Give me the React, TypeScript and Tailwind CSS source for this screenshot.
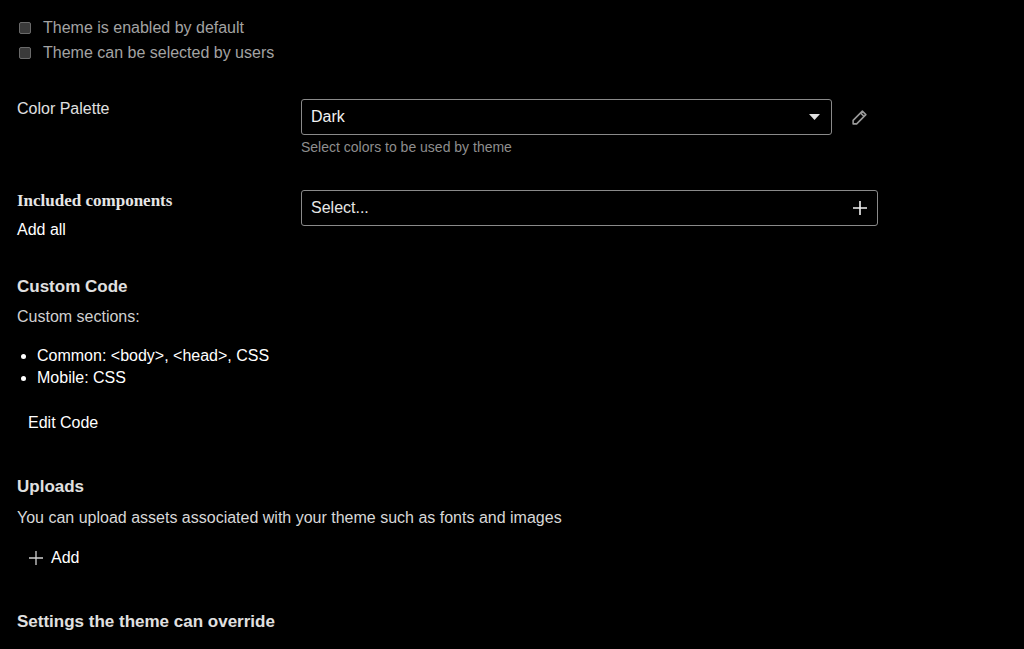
import React from "react";

export default function App() {
  return (
    <div className="min-h-[649px] w-[1024px] bg-black text-[#e6e6e6] overflow-hidden leading-[20px]" style={{ fontFamily: '"Liberation Sans", Arial, sans-serif' }}>
      <div className="pl-[17px] pt-[18px]">
        <div className="flex flex-col gap-[5px] text-[16px] text-[#a3a3a3]">
          {["Theme is enabled by default", "Theme can be selected by users"].map((t) => (
            <label key={t} className="flex items-center h-[20px]">
              <span className="ml-[2px] w-[12px] h-[12px] rounded-[2px] bg-[#3a3a3a] border border-[#6a6a6a]" />
              <span className="ml-[12px]">{t}</span>
            </label>
          ))}
        </div>

        <div className="flex mt-[36px]">
          <div className="w-[284px] text-[16px] pt-[0px] text-[#e0e0e0]">Color Palette</div>
          <div>
            <div className="flex items-center">
              <div className="w-[531px] h-[36px] border border-[#8a8a8a] rounded-[3px] flex items-center justify-between pl-[9px] pr-[11px] text-[16px] text-[#f2f2f2]">
                <span>Dark</span>
                <svg width="11" height="6" viewBox="0 0 11 6"><path d="M0 0h11L5.5 6z" fill="#e0e0e0" /></svg>
              </div>
              <svg className="ml-[19px]" width="17" height="17" viewBox="0 0 24 24" fill="none" stroke="#9a9a9a" strokeWidth="2.2" strokeLinejoin="round">
                <path d="M16 3l5 5L8 21H3v-5z" />
                <path d="M13.5 5.5l5 5" />
              </svg>
            </div>
            <div className="text-[14px] leading-[16px] text-[#8e8e8e] mt-[4px]">Select colors to be used by theme</div>
          </div>
        </div>

        <div className="flex mt-[35px]">
          <div className="w-[284px]">
            <div className="text-[17px] font-semibold text-[#e6e6e6] mt-[1px]" style={{ fontFamily: '"Liberation Serif", serif' }}>Included components</div>
            <div className="text-[16px] text-white mt-[9px]">Add all</div>
          </div>
          <div className="w-[577px] h-[36px] border border-[#8a8a8a] rounded-[3px] flex items-center justify-between pl-[9px] pr-[10px] text-[16px] text-[#e6e6e6]">
            <span>Select...</span>
            <svg width="14" height="14" viewBox="0 0 14 14" stroke="#f0f0f0" strokeWidth="1.6"><path d="M7 0v14M0 7h14" /></svg>
          </div>
        </div>

        <div className="text-[17px] font-bold text-[#e0e0e0] mt-[37px]">Custom Code</div>
        <div className="text-[16px] text-[#d0d0d0] mt-[10px]">Custom sections:</div>
        <ul className="list-disc pl-[20px] mt-[18px] text-[16px] text-white leading-[22px]">
          <li>Common: &lt;body&gt;, &lt;head&gt;, CSS</li>
          <li>Mobile: CSS</li>
        </ul>
        <div className="text-[16px] text-white ml-[11px] mt-[24px]">Edit Code</div>

        <div className="text-[17px] font-bold text-[#e0e0e0] mt-[44px]">Uploads</div>
        <div className="text-[16px] text-[#d8d8d8] mt-[11px]">You can upload assets associated with your theme such as fonts and images</div>
        <div className="flex items-center text-[16px] text-white ml-[12px] mt-[20px]">
          <svg width="14" height="14" viewBox="0 0 14 14" stroke="#d0d0d0" strokeWidth="1.3"><path d="M7 0v14M0 7h14" /></svg>
          <span className="ml-[8px]">Add</span>
        </div>

        <div className="text-[17px] font-bold text-[#e0e0e0] mt-[44px]">Settings the theme can override</div>
      </div>
    </div>
  );
}
